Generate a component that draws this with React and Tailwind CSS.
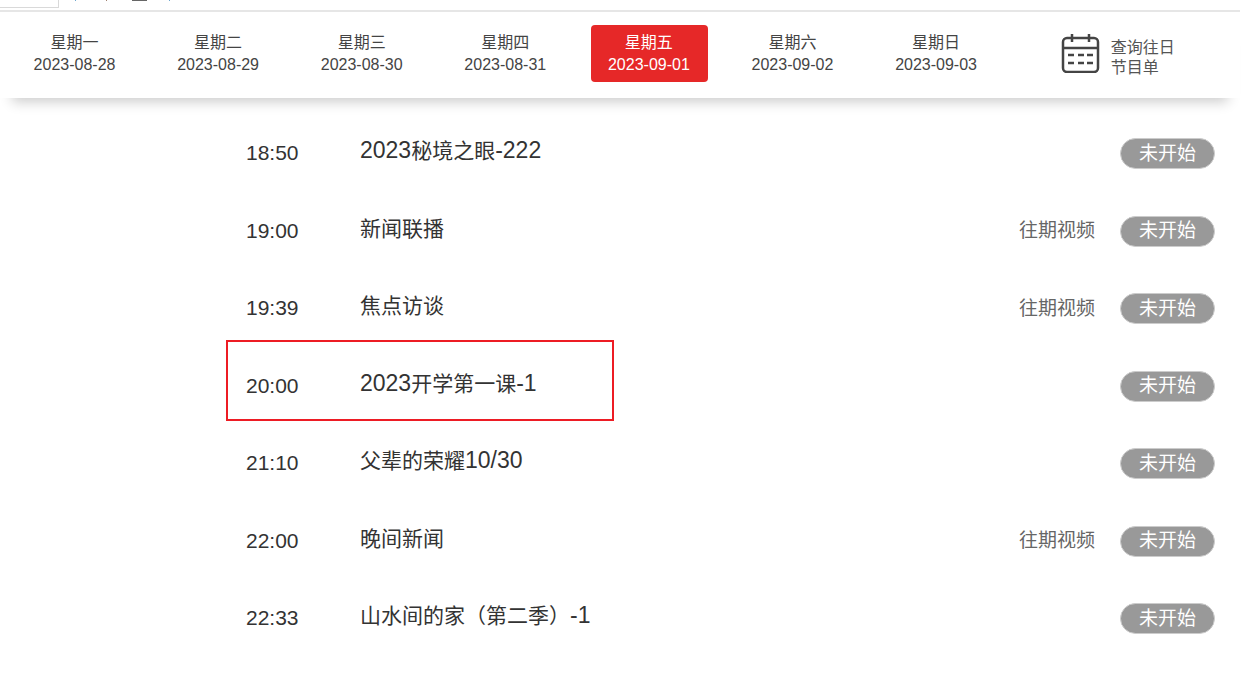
const days = [
  { name: '星期一', date: '2023-08-28' },
  { name: '星期二', date: '2023-08-29' },
  { name: '星期三', date: '2023-08-30' },
  { name: '星期四', date: '2023-08-31' },
  { name: '星期五', date: '2023-09-01', active: true },
  { name: '星期六', date: '2023-09-02' },
  { name: '星期日', date: '2023-09-03' },
];

const programs = [
  { time: '18:50', title: ['2023', '秘境之眼', '-222'] },
  { time: '19:00', title: ['', '新闻联播'], replay: true },
  { time: '19:39', title: ['', '焦点访谈'], replay: true },
  { time: '20:00', title: ['2023', '开学第一课', '-1'], marked: true },
  { time: '21:10', title: ['', '父辈的荣耀', '10/30'] },
  { time: '22:00', title: ['', '晚间新闻'], replay: true },
  { time: '22:33', title: ['', '山水间的家（第二季）', '-1'] },
];

function CalendarIcon() {
  return (
    <svg width="40" height="40" viewBox="0 0 40 40" fill="none" stroke="#444" strokeWidth="2.5">
      <rect x="2" y="5" width="35" height="34" rx="4" />
      <path d="M2 15h35M11 1v8M28 1v8" />
      <path d="M7 22h6M17 22h6M26 22h6M7 30h6M17 30h6M26 30h6" />
    </svg>
  );
}

export default function App() {
  return (
    <div className="w-[1257px] h-[684px] overflow-hidden bg-white text-[#333] font-['Liberation_Sans','Noto_Sans_CJK_SC',sans-serif]">
      <div className="h-[10px] flex items-start">
        <div className="h-[8px] w-[59px] border-r border-b border-[#d9d9d9]" />
        <span className="ml-[16px] w-px h-px bg-[#6ea8d0]" />
        <span className="ml-[30px] w-px h-px bg-[#a08070]" />
        <span className="ml-[25px] w-[15px] h-px bg-[#666]" />
        <span className="ml-[22px] w-px h-px bg-[#6ea8d0]" />
      </div>
      <div className="w-[1240px] h-[88px] border-t-2 border-[#e6e6e6] shadow-[0_16px_12px_-12px_rgba(0,0,0,0.2)] flex items-start pt-[13px] pl-[16.5px]">
        {days.map((d) => (
          <div
            key={d.date}
            className={`w-[117px] h-[57px] mr-[26.6px] pr-[1px] rounded-[4px] flex flex-col items-center justify-center text-[16px] leading-[22px] ${
              d.active ? 'bg-[#e62828] text-white' : 'text-[#444]'
            }`}
          >
            <span>{d.name}</span>
            <span>{d.date}</span>
          </div>
        ))}
        <div className="flex items-start ml-[39px] mt-[8px] gap-[10px] text-[16px] leading-[20px] text-[#555]">
          <CalendarIcon />
          <div className="pt-[5px]">
            <div>查询往日</div>
            <div>节目单</div>
          </div>
        </div>
      </div>
      <div className="w-[1215px] pt-[17px]">
        {programs.map((p) => (
          <div key={p.time} className="relative h-[77.5px] flex items-center pl-[246px] text-[#333]">
            <span className="w-[114px] text-[21px] pb-[2px]">{p.time}</span>
            <span className="flex-1 text-[21px] pb-[7px]">
              <span className="text-[23px]">{p.title[0]}</span>
              {p.title[1]}
              <span className="text-[23px]">{p.title[2]}</span>
            </span>
            {p.replay && <span className="mr-[25px] text-[19px] text-[#666]">往期视频</span>}
            <span className="w-[95px] h-[31px] rounded-full bg-[#999] border border-[#ccc] text-white text-[19px] flex items-center justify-center">
              未开始
            </span>
            {p.marked && <div className="absolute left-[226px] top-[-8px] w-[388px] h-[81px] border-2 border-[#ed1c24]" />}
          </div>
        ))}
      </div>
    </div>
  );
}
